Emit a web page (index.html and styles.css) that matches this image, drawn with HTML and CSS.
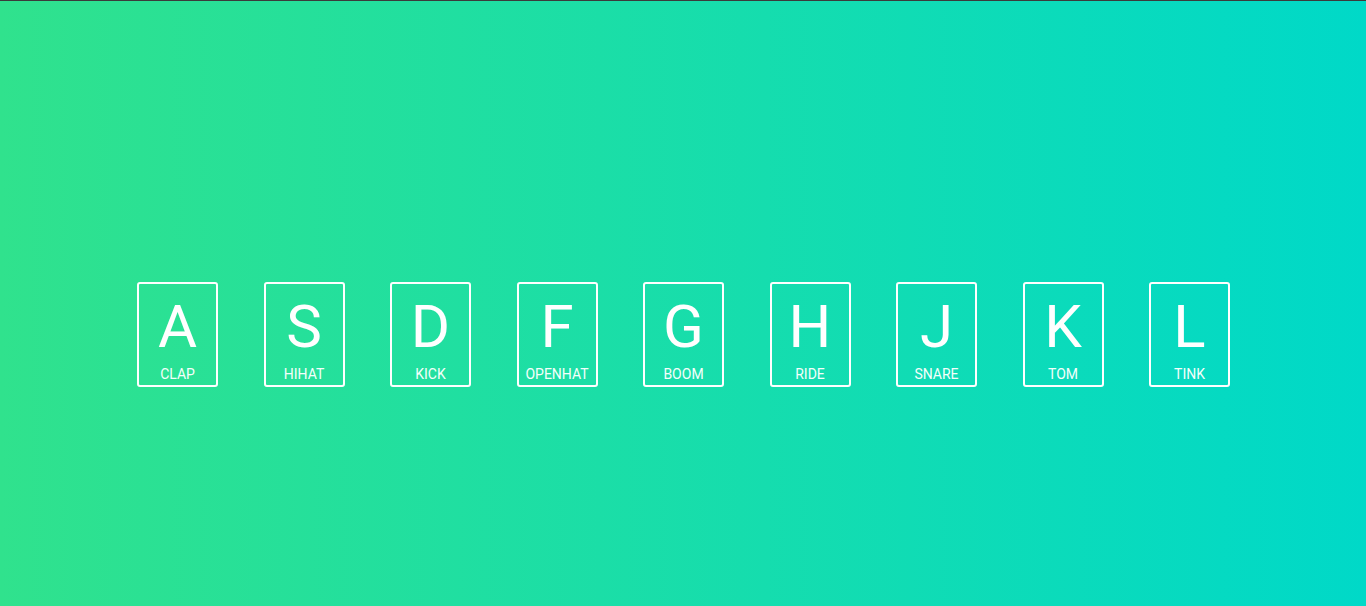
FILE: index.html
```html
<!DOCTYPE html>
<html lang="en">
<head>
<meta charset="utf-8">
<title>Drum Kit</title>
<link rel="stylesheet" href="styles.css">
</head>
<body>
  <div class="keys">
    <div class="key"><kbd>A</kbd><span class="sound">clap</span></div>
    <div class="key"><kbd>S</kbd><span class="sound">hihat</span></div>
    <div class="key"><kbd>D</kbd><span class="sound">kick</span></div>
    <div class="key"><kbd>F</kbd><span class="sound">openhat</span></div>
    <div class="key"><kbd>G</kbd><span class="sound">boom</span></div>
    <div class="key"><kbd>H</kbd><span class="sound">ride</span></div>
    <div class="key"><kbd>J</kbd><span class="sound">snare</span></div>
    <div class="key"><kbd>K</kbd><span class="sound">tom</span></div>
    <div class="key"><kbd>L</kbd><span class="sound">tink</span></div>
  </div>
</body>
</html>
```
FILE: styles.css
```css
* { box-sizing: border-box; }
html, body { margin: 0; padding: 0; }
body {
  height: 606px;
  border-top: 1px solid #3b3b3b;
  background: linear-gradient(to right, #30e28d 0%, #00d9c8 100%);
  font-family: Roboto, "Liberation Sans", sans-serif;
  color: #fff;
  overflow: hidden;
}
.keys {
  display: flex;
  justify-content: center;
  gap: 45.5px;
  padding-top: 281px;
  padding-left: 1px;
}
.key {
  width: 81px;
  height: 105px;
  border: 2px solid #fff;
  border-radius: 3px;
  padding-top: 13px;
  display: flex;
  flex-direction: column;
  align-items: center;
}
kbd {
  display: block;
  font-family: Roboto, "Liberation Sans", sans-serif;
  font-size: 60px;
  line-height: 60px;
  font-weight: 400;
}
.sound {
  margin-top: 10px;
  font-size: 14px;
  line-height: 15px;
  text-transform: uppercase;
  color: #f4fffb;
}
```
